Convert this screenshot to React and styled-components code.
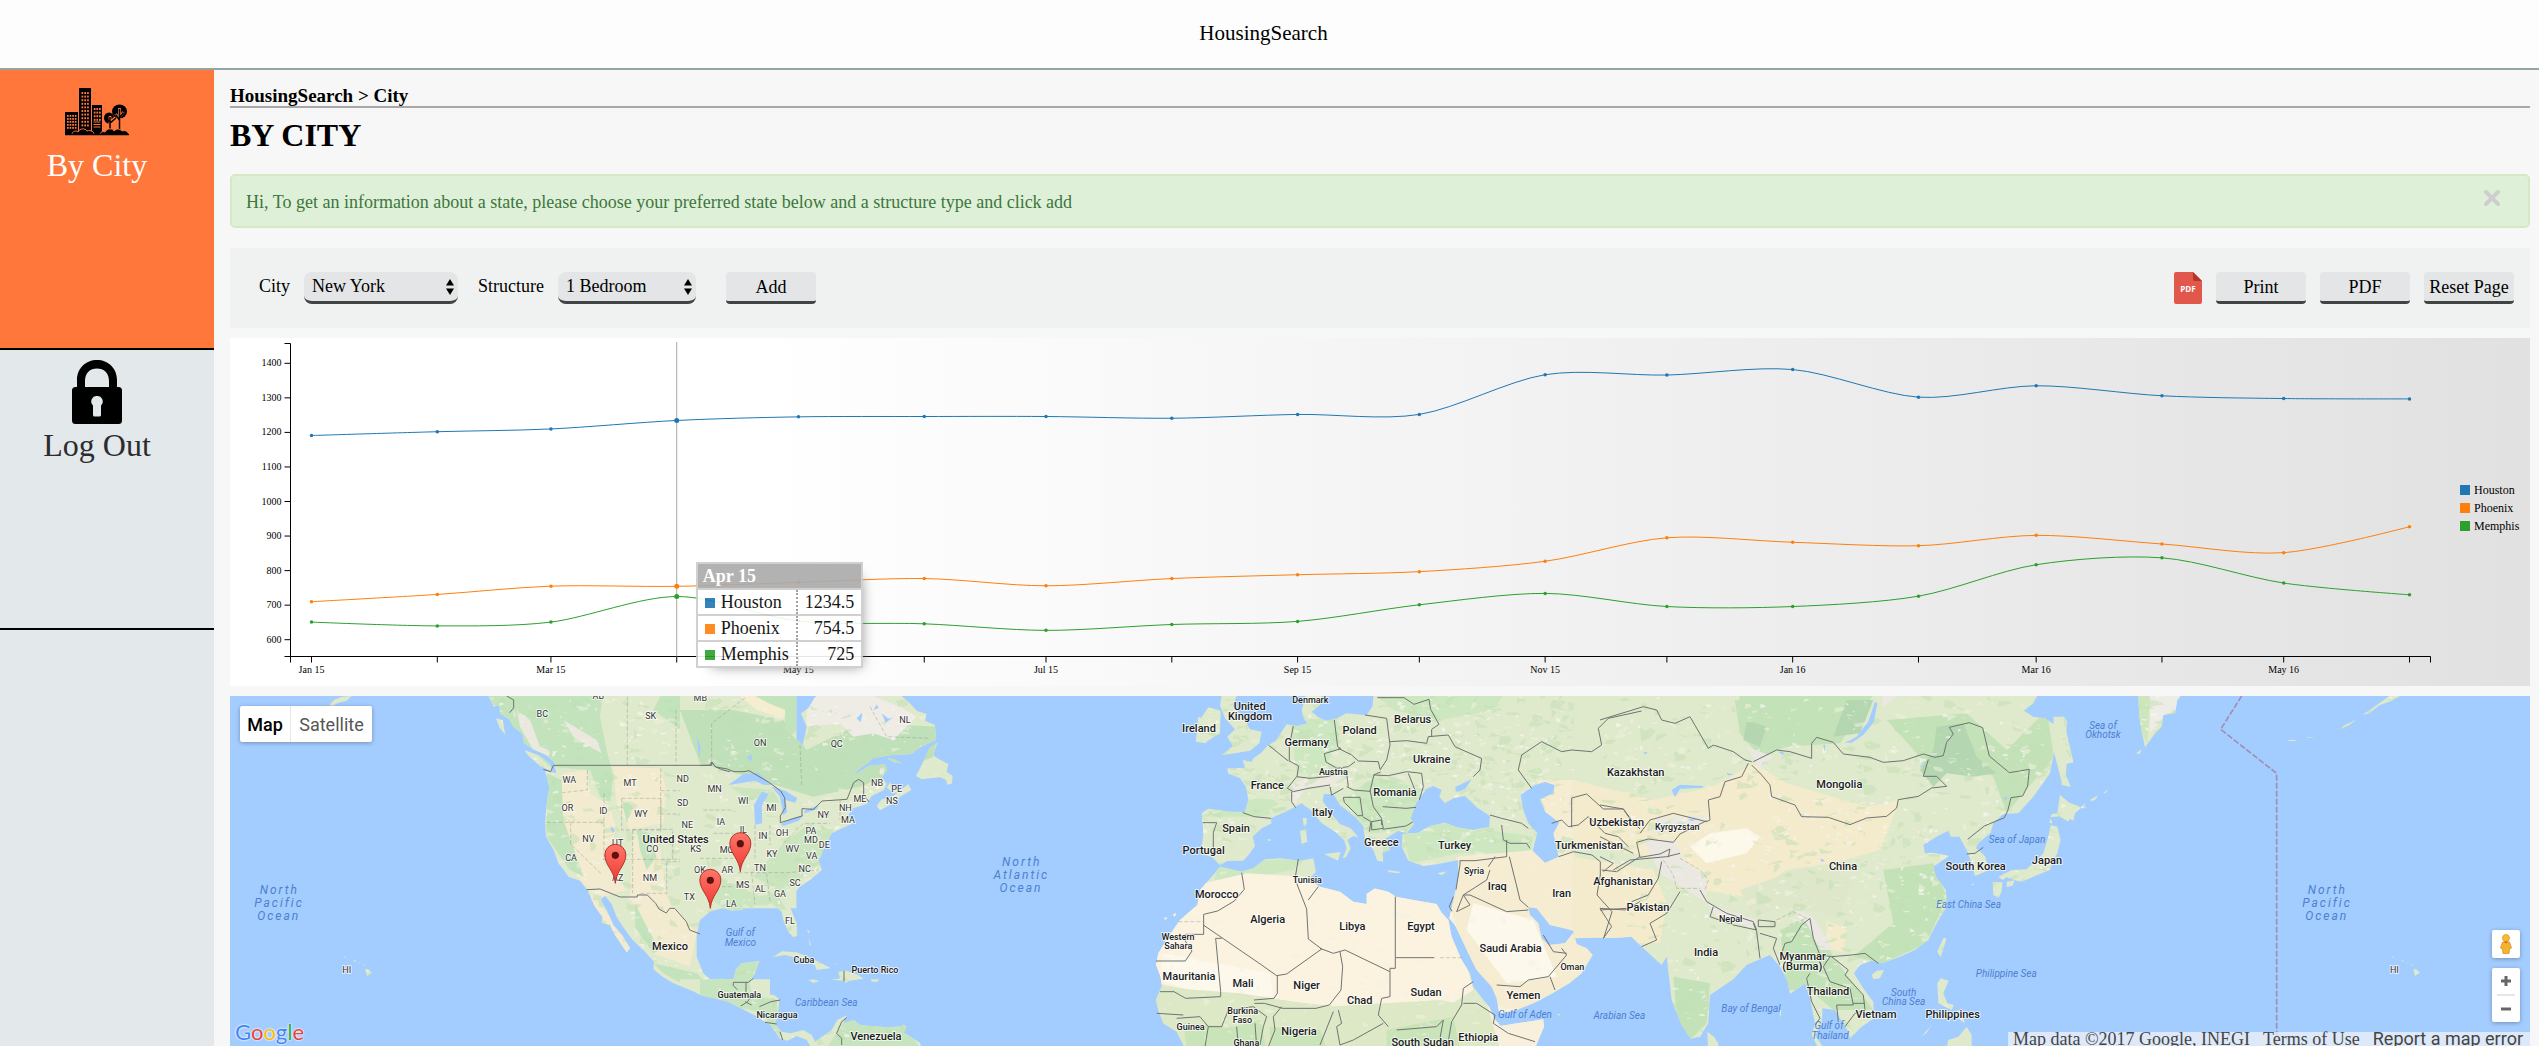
import React, { useLayoutEffect, useRef, useState } from "react";
import styled, { createGlobalStyle } from "styled-components";

const serif = `"Liberation Serif", "Times New Roman", serif`;
const sans = `Roboto, "Liberation Sans", sans-serif`;

const GlobalStyle = createGlobalStyle`
  * { box-sizing: border-box; }
  body { margin: 0; background: #f7f7f7; color: #000; font-family: ${serif}; font-size: 18px; }
  button, select { font: inherit; color: inherit; }
`;

const Page = styled.div`
  display: flex;
  flex-direction: column;
  min-height: 100vh;
`;

const Header = styled.header`
  height: 70px;
  padding: 0 12px 2px 0;
  display: flex;
  align-items: center;
  justify-content: center;
  background: #fdfdfd;
  border-bottom: 2px solid #95a5a6;
  font-size: 21px;
`;

const Body = styled.div`
  flex: 1;
  display: flex;
`;

const Sidebar = styled.nav`
  flex: 0 0 214px;
  background: #e3e8eb;
`;

const NavItem = styled.a`
  display: flex;
  flex-direction: column;
  align-items: center;
  height: 280px;
  padding: ${(p) => (p.$active ? "18px" : "10px")} 20px 0 0;
  border-bottom: 2px solid #000;
  background: ${(p) => (p.$active ? "#ff773a" : "transparent")};
  color: ${(p) => (p.$active ? "#fff" : "#2c2c30")};
  font-size: 32px;
  line-height: 40px;
  text-decoration: none;

  svg { display: block; margin-bottom: ${(p) => (p.$active ? "9px" : "1px")}; }
`;

const Content = styled.main`
  flex: 1;
  min-width: 0;
  padding: 16px 9px 0 16px;
`;

const Breadcrumb = styled.div`
  border-bottom: 2px solid #a8a8a8;
  font-size: 19px;
  font-weight: bold;
  line-height: 20px;
`;

const Title = styled.h1`
  margin: 8px 0 20px;
  font-size: 32px;
  line-height: 38px;
`;

const Alert = styled.div`
  display: flex;
  align-items: center;
  justify-content: space-between;
  height: 54px;
  padding: 2px 28px 0 14px;
  border: 2px solid #d6e9c6;
  border-radius: 5px;
  background: #dff0d8;
  color: #3c763d;
`;

const CloseButton = styled.button`
  padding: 0 0 8px;
  border: 0;
  background: none;
  line-height: 0;
`;

const Toolbar = styled.div`
  display: flex;
  align-items: flex-start;
  justify-content: space-between;
  height: 80px;
  margin-top: 20px;
  padding: 24px 16px 0 29px;
  background: #f0f2f1;
`;

const Group = styled.div`
  display: flex;
  align-items: flex-start;
  gap: ${(p) => p.$gap}px;
`;

const FieldLabel = styled.label`
  display: flex;
  gap: 14px;
  line-height: 29px;
`;

const SelectBox = styled.span`
  position: relative;
  display: block;
  width: ${(p) => p.$width}px;

  svg { position: absolute; right: 4px; top: 7px; pointer-events: none; }
`;

const Select = styled.select`
  appearance: none;
  display: block;
  width: 100%;
  height: 32px;
  padding: 0 20px 0 8px;
  border: 0;
  border-bottom: 3px solid #404543;
  border-radius: 8px;
  background: #e4e5e7;
`;

const Button = styled.button`
  width: 90px;
  height: 32px;
  padding: 2px 0 0;
  border: 0;
  border-bottom: 3px solid #404543;
  border-radius: 4px;
  background: #e4e5e7;
  white-space: nowrap;
`;

const ChartBox = styled.section`
  position: relative;
  height: 348px;
  margin-top: 10px;
  background: linear-gradient(to right, #fff 23%, #e1e1e1);

  > svg { display: block; }
`;

const Tooltip = styled.table`
  position: absolute;
  top: 224px;
  width: 166px;
  border-collapse: collapse;
  background: #fff;
  opacity: 0.9;
  box-shadow: 7px 7px 12px -9px #777;

  th, td { height: 26px; padding: 0 7px; border: 2px solid #ccc; line-height: 24px; white-space: nowrap; }
  th { background: #aaa; color: #fff; text-align: left; padding-left: 5px; }
  td:first-child { border-right: 2px dotted #999; }
  td:last-child { border-left: 2px dotted #999; text-align: right; }
`;

const Swatch = styled.span`
  display: inline-block;
  width: 10px;
  height: 10px;
  margin-right: 6px;
  background: ${(p) => p.$color};
`;

const MapBox = styled.section`
  position: relative;
  height: 350px;
  margin-top: 10px;
  overflow: hidden;
  background: #a3ccff;
  font-family: ${sans};

  > svg { display: block; width: 100%; height: 100%; }
`;

const MapType = styled.div`
  position: absolute;
  left: 10px;
  top: 10px;
  display: flex;
  border-radius: 2px;
  background: #fff;
  box-shadow: 0 1px 4px rgba(0, 0, 0, 0.3);
`;

const TypeButton = styled.button`
  height: 36px;
  width: ${(p) => (p.$active ? "50px" : "82px")};
  padding: 0;
  border: 0;
  border-left: ${(p) => (p.$active ? "0" : "1px solid #e6e6e6")};
  background: none;
  color: ${(p) => (p.$active ? "#000" : "#565656")};
  font-size: 18px;
  font-weight: ${(p) => (p.$active ? 500 : 400)};
`;

const MapControls = styled.div`
  position: absolute;
  right: 10px;
  bottom: 24px;
  display: flex;
  flex-direction: column;
  gap: 10px;
`;

const ControlCard = styled.div`
  display: flex;
  flex-direction: column;
  align-items: center;
  width: 28px;
  border-radius: 2px;
  background: #fff;
  box-shadow: 0 1px 4px rgba(0, 0, 0, 0.3);
`;

const ControlRule = styled.span`
  width: 18px;
  height: 2px;
  background: #e6e6e6;
`;

const ControlButton = styled.button`
  display: flex;
  align-items: center;
  justify-content: center;
  width: 28px;
  height: ${(p) => p.$height}px;
  padding: 0;
  border: 0;
  background: none;
`;

const GoogleMark = styled.a`
  position: absolute;
  left: 5px;
  bottom: 2px;
  font-family: Lato, sans-serif;
  font-size: 22px;
  line-height: 24px;
  text-decoration: none;
  text-shadow: 0 0 2px #fff, 0 0 2px #fff;
`;

const Tint = styled.span`
  color: ${(p) => p.$color};
`;

const Attribution = styled.div`
  position: absolute;
  right: 0;
  bottom: 0;
  display: flex;
  gap: 13px;
  height: 14px;
  padding: 0 7px 0 5px;
  background: rgba(245, 245, 245, 0.7);
  color: #444;
  font-family: ${serif};
  line-height: 14px;
  white-space: nowrap;

  a { color: inherit; text-decoration: none; }
  a:last-child { font-family: ${sans}; }
`;

/* ---------- icons ---------- */

const Windows = ({ x, y, cols, rows, dx = 3, dy = 4, h = 2 }) => (
  <g fill="#ff773a">
    {Array.from({ length: cols * rows }, (_, i) => (
      <rect key={i} x={x + (i % cols) * dx} y={y + Math.floor(i / cols) * dy} width="1.7" height={h} />
    ))}
  </g>
);

const CityIcon = () => (
  <svg width="64" height="48" viewBox="0 0 64 48" aria-hidden="true">
    <path d="M0 24h13v23H0zM14 0h12v47H14zM27 17h10v30H27z" />
    <Windows x={2} y={27} cols={4} rows={5} dx={2.6} dy={3} h={1.8} />
    <Windows x={16.5} y={4} cols={3} rows={10} dx={2.8} dy={3.6} />
    <Windows x={28.8} y={20} cols={3} rows={4} dx={2.6} dy={3.6} />
    <path d="M28.5 34h7M28.5 36.5h7M28.5 39h7" stroke="#ff773a" />
    <ellipse cx="54.5" cy="23.5" rx="7.5" ry="7" />
    <ellipse cx="44" cy="30" rx="5" ry="5.5" />
    <path d="M54.500 20v22M54.500 31l-4-5M54.500 29l4-5M45 28v14M45 34l5-4" stroke="#ff773a" strokeWidth="2.800" fill="none" />
    <path d="M54.500 21v24M54.500 32l-4-5.500M54.500 30l4-5.500M45 29v15M45 35l6-5M45 34l-3-3" stroke="#000" strokeWidth="1.500" fill="none" />
    <path d="M7 47c0-4 4-5 6-3 2-4 7-4 9-1 4-1 7 0 7 4zM35 47c0-3 3-4 5-3 2-4 8-4 9-1 3-3 6-2 8 0 3-1 6 0 7 4z" stroke="#ff773a" />
    <path d="M0 46.500h64" stroke="#000" strokeWidth="1.500" />
  </svg>
);

const LockIcon = () => (
  <svg width="50" height="64" viewBox="0 0 50 64" aria-hidden="true">
    <path
      fillRule="evenodd"
      d="M5 27V20C5 8 14 0 25 0s20 8 20 20v7h1.500a3.500 3.500 0 0 1 3.500 3.500v30a3.500 3.500 0 0 1-3.500 3.500h-43A3.500 3.500 0 0 1 0 60.500v-30A3.500 3.500 0 0 1 3.500 27zM13 27h24v-6c0-8-5-12.500-12-12.500S13 13 13 21zM25 36a5.500 5.500 0 0 0-4 9.500V55q0 1.500 1.500 1.500h5q1.500 0 1.500-1.500v-9.500A5.500 5.500 0 0 0 25 36z"
    />
  </svg>
);

const PdfIcon = () => (
  <svg width="28" height="32" viewBox="0 0 28 32" aria-label="PDF file" role="img">
    <path d="M2 0h17l9 9v21a2 2 0 0 1-2 2H2a2 2 0 0 1-2-2V2a2 2 0 0 1 2-2z" fill="#e2574c" />
    <path d="M19 0l9 9h-7a2 2 0 0 1-2-2z" fill="#b53629" />
    <text x="14" y="20" textAnchor="middle" fontFamily="Open Sans, sans-serif" fontSize="8" fontWeight="700" fill="#fff">PDF</text>
  </svg>
);

const Arrows = () => (
  <svg width="8" height="16" viewBox="0 0 8 16" aria-hidden="true">
    <path d="M4 0l4 6.500H0zM4 16l4-6.500H0z" />
  </svg>
);

const CloseIcon = () => (
  <svg width="16" height="16" viewBox="0 0 16 16" aria-hidden="true">
    <path d="M2 2l12 12M14 2L2 14" stroke="#cecece" strokeWidth="4" strokeLinecap="round" />
  </svg>
);

const Pegman = () => (
  <svg width="12" height="20" viewBox="0 0 12 20" aria-hidden="true">
    <path d="M2.500 8L.5 14l2 .8L3 19.500h6l.5-4.700 2-.8-2-6z" fill="#f5b32b" stroke="#c98c1d" strokeWidth=".7" />
    <circle cx="6" cy="4" r="3.500" fill="#fbbc2c" stroke="#d1931e" strokeWidth=".7" />
    <path d="M4 7.500h4L6 9.500z" fill="#e5542f" />
  </svg>
);

/* ---------- chart ---------- */

const DAYS = [0, 31, 59, 90, 120, 151, 181, 212, 243, 273, 304, 334, 365, 396, 425, 456, 486, 517];
const MONTHS = ["Jan 15", "", "Mar 15", "", "May 15", "", "Jul 15", "", "Sep 15", "", "Nov 15", "", "Jan 16", "", "Mar 16", "", "May 16", ""];
const SERIES = [
  { name: "Houston", color: "#1f77b4", values: [1191, 1202, 1210, 1234.5, 1245, 1246, 1246, 1241, 1252, 1252, 1367, 1366, 1382, 1302, 1335, 1306, 1298, 1297] },
  { name: "Phoenix", color: "#ff7f0e", values: [710, 731, 755, 754.5, 766, 777, 756, 777, 788, 797, 827, 895, 882, 872, 902, 877, 852, 927] },
  { name: "Memphis", color: "#2ca02c", values: [651, 640, 651, 725, 654, 646, 627, 644, 653, 701, 734, 696, 696, 726, 817, 837, 764, 730] },
];
const FOCUS = 3;

function cardinal(points) {
  const tangent = (i) => {
    const a = points[i - 1];
    const b = points[i + 1];
    return a && b ? [(b[0] - a[0]) * 0.15, (b[1] - a[1]) * 0.15] : [0, 0];
  };
  return points.reduce((d, p, i) => {
    if (!i) return `M${p}`;
    const q = points[i - 1];
    const s = tangent(i - 1);
    const t = tangent(i);
    return `${d}C${q[0] + s[0]},${q[1] + s[1]} ${p[0] - t[0]},${p[1] - t[1]} ${p}`;
  }, "");
}

function Chart() {
  const box = useRef(null);
  const [width, setWidth] = useState(2300);

  useLayoutEffect(() => {
    const measure = () => setWidth(box.current.clientWidth);
    measure();
    const observer = new ResizeObserver(measure);
    observer.observe(box.current);
    return () => observer.disconnect();
  }, []);

  const left = 60.5;
  const right = width - 99.5;
  const base = 318.5;
  const x = (day) => 81.5 + (day * (width - 202)) / 517;
  const y = (value) => 301.7 - (value - 600) * 0.3455;

  return (
    <ChartBox ref={box}>
      <svg width={width} height="348" fontFamily={serif} fontSize="10" role="img" aria-label="Rent by city">
        <path d={`M${left - 6} 5.500H${left}V${base}H${left - 6}M${left} ${base + 6}V${base}H${right}v6`} fill="none" stroke="#000" />
        {[600, 700, 800, 900, 1000, 1100, 1200, 1300, 1400].map((v) => (
          <g key={v}>
            <path d={`M${left - 6} ${y(v)}h6`} stroke="#000" />
            <text x={left - 9} y={y(v) + 3} textAnchor="end">{v}</text>
          </g>
        ))}
        {DAYS.map((day, i) => (
          <g key={day}>
            <path d={`M${x(day)} ${base}v6`} stroke="#000" />
            <text x={x(day)} y={base + 16} textAnchor="middle">{MONTHS[i]}</text>
          </g>
        ))}
        <path d={`M${x(DAYS[FOCUS])} 4V${base}`} stroke="#aaa" />
        {SERIES.map((s) => {
          const points = s.values.map((v, i) => [x(DAYS[i]), y(v)]);
          return (
            <g key={s.name} fill={s.color}>
              <path d={cardinal(points)} fill="none" stroke={s.color} />
              {points.map(([cx, cy], i) => (
                <circle key={i} cx={cx} cy={cy} r={i === FOCUS ? 2.5 : 1.75} />
              ))}
            </g>
          );
        })}
        {SERIES.map((s, i) => (
          <g key={s.name} fontSize="12">
            <rect x={width - 70} y={147 + i * 18} width="10" height="10" fill={s.color} />
            <text x={width - 56} y={156 + i * 18}>{s.name}</text>
          </g>
        ))}
      </svg>
      <Tooltip style={{ left: x(DAYS[FOCUS]) + 19 }}>
        <thead>
          <tr><th colSpan="2">Apr 15</th></tr>
        </thead>
        <tbody>
          {SERIES.map((s) => (
            <tr key={s.name}>
              <td><Swatch $color={s.color} />{s.name}</td>
              <td>{s.values[FOCUS]}</td>
            </tr>
          ))}
        </tbody>
      </Tooltip>
    </ChartBox>
  );
}

/* ---------- map ----------
   The world is drawn at three units a pixel, in five sheets side by side. */

const SHEET = { america: 0, atlantic: 1410, europe: 2730, asia: 4110, pacific: 5490 };

const LAND = {
  america: [
    "M775 18L792 50 806 45 812 72 838 88 850 110 878 132 882 160 910 178 950 196 972 215 978 250 945 243 958 290 950 340 945 400 948 440 972 482 985 520 1005 545 1015 560 1050 572 1072 600 1095 650 1118 682 1115 698 1140 705 1155 735 1190 787 1200 775 1178 738 1150 705 1130 660 1112 630 1125 617 1145 642 1160 682 1182 715 1208 750 1240 780 1272 815 1270 838 1300 862 1330 880 1380 900 1420 916 1445 906 1475 925 1620 1000V868H1440L1420 850 1400 800 1400 740 1410 690 1440 665 1475 655 1700 655V18Z",
    "M883 180L930 197 960 222 968 246 930 228 895 197Z",
    "M798 85L818 90 826 135 808 112Z",
    "M298 45L312 30 335 20 365 18 350 32 325 38 308 48Z",
    "M405 838L414 838 426 848 412 858ZM369 810l9 2-3 4zM342 799l6 1-3 5zM400 823l5 2-3 3zM386 818l5 0-3 3z",
  ],
  atlantic: [
    "M-60 18H165L205 40 255 60 256 115 290 150 308 165 320 110 303 70 325 55 345 22 350 18H605L630 40 650 62 680 72 675 92 705 105 708 150 660 172 635 192 570 196 520 205 475 240 460 258 505 228 555 222 562 240 545 262 560 282 552 300 515 318 500 342 460 355 440 382 465 385 462 398 395 430 372 475 362 500 355 510 366 540 330 570 300 590 278 615 270 650 290 700 292 738 280 742 265 725 250 690 245 665 215 640 195 646 165 645 155 655 130 640 128 660 95 662 60 652 -60 655V868H40L58 866 100 868 108 838 125 820 178 813 165 850 148 880 155 908 195 912 222 915 238 928 234 975 225 1002 245 1025 272 1030 310 1020 335 1035 345 1055 395 1020 412 990 440 976 430 1000 462 990 480 1005 560 1012 620 1008 612 1028 660 1058 665 1075H335L320 1050 290 1038 262 1052 240 1046 212 1005 185 990 165 962 125 955 85 935 0 915 -60 880Z",
    "M648 258L665 225 690 172 712 158 700 195 712 205 745 222 740 245 758 258 756 280 742 285 738 270 720 262 690 265 665 268Z",
    "M530 348L545 328 575 322 625 282 634 300 600 320 570 345 540 360ZM560 292l12-16 4 22 24 6-20 6z",
    "M560 205l20 2 25 12-18 0z",
    "M218 802L245 784 290 787 340 808 392 834 350 840 345 826 300 806 255 795Z",
    "M392 868L420 866 415 845 440 842 475 855 490 866 450 872 437 878 425 872Z",
    "M325 870l18-2 14 6-16 5zM513 868h24l-4 7h-18zM322 718l8 8-6 4zM325 742l9 26-5-4zM606 1005l10 0-2 8zM550 866l5 2zM404 820l6 1-3 3zM362 710l4 14zM610 916l4 6z",
    "M1495 80L1520 90V160L1488 155Z",
  ],
  europe: [
    "M497 18H700L698 48 680 76 620 70 590 85 560 92 535 82 515 65 540 45 545 18ZM497 18L485 60 492 88 505 100 470 108 440 103 425 125 408 152 385 165 362 190 340 205 335 215 308 210 315 235 262 235 265 250 300 265 318 290 325 330 315 366 270 365 205 356 185 370 190 430 183 492 215 500 240 525 262 513 310 512 330 490 345 468 338 440 365 415 395 400 392 385 430 368 460 354 485 340 512 360 545 400 585 425 612 450 620 475 608 505 618 502 632 475 622 450 640 438 655 442 632 415 600 402 575 372 548 332 552 312 580 312 600 345 645 380 670 408 675 448 700 480 712 512 730 515 728 488 750 480 738 445 775 422 800 430 822 402 812 385 828 340 858 298 880 288 905 300 898 320 915 340 940 325 975 318 1010 352 1050 378 1048 410 1000 420 950 412 915 398 870 408 835 428 788 432 785 470 805 512 850 528 895 522 955 510 955 560 945 610 928 685 945 705 985 790 1010 840 1055 890 1070 925 1078 970 1130 960 1190 935 1240 908 1290 878 1325 850 1358 795 1340 775 1310 762 1300 728 1275 760 1225 765 1205 745 1195 700 1170 675 1165 652 1190 655 1230 705 1285 718 1320 728 1390 745 1485 740 1560 780V18H700L497 18Z",
    "M925 690L905 668 890 642 850 635 768 620 745 605 705 595 680 612 680 642 640 635 600 605 540 590 505 570 528 545 520 505 480 512 420 505 375 508 340 535 305 545 240 530 215 560 182 598 172 645 120 690 85 740 55 790 48 825 62 860 65 890 48 930 55 960 70 1000 110 1025 135 1075H1185L1212 1010 1210 988 1130 1000 1082 1008 1062 985 1050 955 1000 890 990 850 965 810 935 740Z",
    "M245 18H290L278 48 315 88 330 118 365 125 358 160 330 182 245 196 278 168 262 140 285 118 255 85 240 45Z",
    "M168 152L180 128 165 112 205 52 242 62 240 130 195 158Z",
    "M480 422L498 418 502 455 485 462ZM488 385l12 0 0 18-8 8zM552 492l50-6-8 26zM742 540l42 6-10 4-28-4zM892 550l28-6-14 12zM382 446l14 4-10 4zM792 480l6 6zM50 680l6 5zM72 684l10-2-5 8zM98 675l10-7-3 12zM1252 972l12 1-8 4z",
  ],
  asia: [
    "M-80 18H1312L1300 40 1272 62 1300 80 1335 85 1365 105 1362 190 1350 250 1300 320 1255 370 1210 372 1180 398 1172 428 1135 460 1128 475 1155 498 1168 540 1125 558 1115 520 1100 480 1078 440 1052 440 1045 422 1010 440 970 465 975 490 1000 488 1048 498 1000 530 1008 560 1038 600 1040 650 1010 700 985 750 945 780 900 800 848 820 815 812 780 825 762 850 790 895 820 935 822 985 785 1010 750 1045 742 1020 705 960 668 955 665 1005 645 1035 672 1075H655L635 1035 645 1000 630 925 615 880 570 912 562 870 540 830 510 795 480 808 440 825 400 868 330 915 325 1000 300 1040 272 1046 245 1005 215 930 200 800 185 825 125 770 95 740-80 745Z",
    "M1380 314L1400 335 1440 350 1425 370 1420 392 1390 378 1350 382 1358 400 1348 398 1355 372 1372 370Z",
    "M1352 405L1372 410 1382 450 1372 490 1358 515 1350 540 1320 552 1265 575 1250 572 1220 562 1208 570 1195 560 1235 540 1280 538 1330 490 1345 440Z",
    "M1178 575l30 2-4 30-8 16-16-8zM1220 575l24-4-6 16-18 4z",
    "M1390 78L1402 95 1398 120 1420 215 1400 222 1398 255 1412 290 1385 285 1390 220 1378 150Z",
    "M1012 785L1030 745 1040 745 1022 802ZM815 855L830 842 852 840 840 865 820 868ZM1012 880L1022 865 1046 872 1030 910 1042 940 1062 945 1055 960 1015 940ZM1040 1075L1045 1050 1075 1040 1100 1010 1115 1035V1075ZM964 1040l34-38-20 28zM1035 965l20 15-10 15zM1070 960l15 5 10 35-15-10zM322 1025l20 15 14 22-8 14h-24zM538 960l6 0-2 25zM1112 582l12 0-6 4zM1450 355l8-8-2 8zM1470 330l28-18-22 20z",
  ],
  pacific: [
    "M235 18H362L352 30 345 70 310 75 305 110 282 135 255 172 246 130 238 80Z",
    "M228 190l16-12-4 14zM90 335l24-18-8 12zM60 355l16-16-6 16zM130 308l16-12-10 14zM168 280l8-6zM412 50l12 16zM528 120l10 3zM604 145l6 3zM683 150h28l-6 3h-22zM738 142l28-1-20 3zM840 118l12-12 35-16-18 15zM908 74l30-20 50-36 32 0-28 16-34 12-30 24zM-20 80l32 0 8 20-4 80 24 38-24 0-8 35 20 38-22 -12-26-100zM0 315l30 25 32 14-20 18-18 22-24-14z",
    "M1060 838L1069 838 1080 848 1065 858ZM1023 810l9 2-3 4zM996 799l6 1-3 5zM1053 823l5 2-3 3zM1039 818l5 0-3 3z",
  ],
};

const WATER = {
  america: ["M1350 100l20-15 22 10 20 30-5 40-12 25-10-40-25-30z", "M1142 408l10 10 0 10-8-6z", "M1405 150l10 30-4 12z"],
  atlantic: [
    "M85 285L130 253 175 248 215 285 190 284 165 272 130 278Z",
    "M162 345L185 305 206 312 186 345 186 400 165 404Z",
    "M215 290L255 302 292 325 285 338 255 330 262 365 250 375 240 320Z",
    "M243 402L275 385 312 375 296 392 250 408Z",
    "M312 362L355 346 350 358 315 370Z",
    "M470 85l18-18-6 30zM545 70l20 16 14-4-22 16zM140 205l14-12 2 20zM-10 140l12 30-4 35z",
    "M520 60l10-16 6 10z",
  ],
  europe: [
    "M1142 315L1185 285 1215 276 1244 285 1240 310 1200 328 1215 365 1258 398 1240 430 1256 500 1215 518 1178 482 1192 430 1165 400 1150 360Z",
    "M945 292L995 268 975 298 950 306Z",
    "M1365 300l14-10 4 16-18 22zM1328 330l6 0 0 14z",
  ],
  asia: [
    "M735 158L770 140 805 95 825 35 832 40 822 95 790 135 755 158Z",
    "M215 300L240 284 310 288 308 293 240 296 225 322Z",
    "M262 388h28l-14 6zM535 185l16 0-2 10zM670 165l6 0-2 20zM380 248l22 6-18 2zM130 186l12 0-6 8zM660 505l14 6-8 6zM960 232l10-16-4 16zM1210 325l12-6-4 14z",
  ],
  pacific: [],
};

/* terrain patches: [fill, path], clipped to the coastline */
const TERRAIN = {
  america: [
    ["#c3e3bd", "M760 0H1120L1110 80 1130 180 1150 260 1140 340 1110 320 1080 240 960 230 860 140Z"],
    ["#c3e3bd", "M1300 0H1700V120L1560 260 1460 240 1400 180 1340 110 1270 60Z"],
    ["#ebe8df", "M860 60L900 90 930 170 960 180 955 205 910 180 870 110ZM1000 90L1050 120 1100 150 1115 190 1080 170 1030 140Z"],
    ["#f3ebcf", "M1000 250L1070 240 1080 310 1140 350 1160 420 1120 520 1190 600 1100 625 1050 570 1010 450 990 350ZM1150 230L1290 235 1310 300 1300 400 1200 420 1160 340ZM1210 430L1290 470 1310 620 1400 730 1380 830 1270 790 1200 620Z"],
    ["#c3e3bd", "M950 250L995 270 1000 390 1040 500 1060 560 1020 540 950 440ZM1215 640L1245 700 1290 780 1270 790 1215 710ZM1270 820L1400 850 1440 890 1400 905 1300 850ZM1175 330L1210 350 1190 400ZM1220 420L1260 430 1280 500 1250 540 1230 480Z"],
    ["#f3ebcf", "M1085 610L1200 760 1210 800 1180 790 1080 640Z"],
  ],
  atlantic: [
    ["#bfe0b9", "M-60 60L100 60 250 90 320 180 480 100 720 110 700 200 480 290 340 320 180 270 0 220Z"],
    ["#eeece4", "M320 18H520L600 50 650 80 580 150 520 130 460 140 420 100 320 110Z"],
    ["#f5edd0", "M120 18H170L260 60 250 85 170 60Z"],
    ["#cbe5bf", "M260 450L330 400 400 420 380 500 320 550 260 600 180 620 60 560 20 620 80 660 260 660 220 590 160 560ZM90 290L220 300 240 340 150 330Z"],
    ["#c6e4bd", "M0 790H180V920L230 930 240 1040 180 980 0 920Z"],
    ["#c6e4bd", "M380 1075L440 980 620 1010 660 1075Z"],
  ],
  europe: [
    ["#cde7c0", "M450 90L590 85 600 160 540 250 470 250ZM690 0H1100L1060 60 900 90 760 60ZM310 320L400 330 440 360 360 380 180 380 250 350ZM700 260L860 300 830 420 690 430 610 330ZM790 430L900 400 1180 440 1170 490 1100 490 960 490 810 520ZM230 520L500 505 460 540 300 570 220 610Z"],
    ["#ece9e1", "M440 290L500 265 620 255 590 290 500 290 460 350Z"],
    ["#f5ecd2", "M950 500L1180 480 1500 490 1500 780 1360 900 1080 975 920 700ZM1190 270L1500 270 1500 480 1240 450Z"],
    ["#fbf3df", "M20 620L320 550 500 560 780 610 930 640 1000 900 920 950 700 960 400 930 200 910 50 880Z"],
    ["#fcf8ec", "M1000 640L1180 690 1250 860 1100 880 980 720ZM70 790L390 850 400 920 180 910 60 870Z"],
    ["#dce8c6", "M40 890L300 910 560 950 900 930 1060 960 1150 1075H40Z"],
    ["#c8e4b8", "M130 1000L280 1010 360 990 380 1075H140ZM390 1010L540 1020 560 1075H390ZM740 1020L940 980 960 1075H740Z"],
    ["#f8f0dc", "M1040 940L1230 980 1200 1075H1080Z"],
  ],
  asia: [
    ["#c4e2b8", "M400 0H830L720 160 560 170 480 200 420 130ZM860 90L1100 70 1220 180 1340 60 1362 200 1220 370 1180 260 1080 190 1000 290 960 200ZM850 540L1000 520 1040 620 980 760 850 820 760 800 880 700ZM540 720L640 680 700 800 820 960 700 960 630 900 560 900ZM220 860L330 880 320 1000 270 1050 230 980Z"],
    ["#b4d7b1", "M1010 110L1090 100 1130 200 1190 250 1120 260 1040 250 1000 290 960 240 1000 180ZM740 30L820 30 780 130 700 140ZM440 90L500 110 480 170 430 150Z"],
    ["#f4ebcd", "M-80 270L160 330 340 290 460 220 560 280 800 350 900 330 840 480 700 520 560 540 440 620 300 600 150 500-80 460ZM-80 500L160 540 200 640 180 760-80 760ZM680 690L740 720 730 790 680 770Z"],
    ["#fcf8ea", "M270 470L330 430 440 415 480 440 440 490 320 520Z"],
    ["#eae8e1", "M130 450L220 450 260 520 320 560 320 640 260 600 180 550ZM320 640L470 690 460 715 350 680ZM560 645L640 680 700 780 660 780 620 700ZM440 170L520 200 480 240ZM170 385L320 375 300 410 150 430ZM840 0H920L850 50Z"],
    ["#dfe7cb", "M420 600L620 530 760 560 720 680 560 650 460 680Z"],
  ],
  pacific: [
    ["#eeece6", "M270 0H360V60L320 70 270 130Z"],
    ["#cfe6bd", "M230 0H270L262 160 240 120Z"],
  ],
};

const BORDERS = {
  america: ["M830 18l21 12v24l-12 14M940 238l22 7 8-19H1440l5-10 12 15 25 10 18 4", "M1070 599l40-2 60 24h52v-6h30l25 25 10 17 22 12 10-14h15l35 40 10 25 31 12"],
  atlantic: ["M0 226h35v-10l12 15 35 6 20 8h30l15-3 60 35 35 26 12 20 2 30-15 25v20l65-20v-22l35 2 25-25 75-5 20-50 15-10 15 10v35l15 22", "M160 865l-15 12h-45v10l12 12M138 877v30l14 14-10 15-20 12M135 935l20 10M178 950l35-15 28-5M195 997l35 5M240 1025l8 25M432 843v32M440 983l-15 12-15 35 15 15v20"],
  europe: [
    "M583 90l10 80 10 6-50 15 5 25 35 20M595 175l40 20 20 18 60 2 5 22M720 240l20-30 10-45-10-80-65-10M590 235l35-5 20-15M620 250l5 40M620 290l20 10 50 4 12-50 20-8M750 155l50-3 60 8 5-20 60-5 20 35 45 20 35 15-5 35-20 20M875 140v-22l22-15-25-45-5-30-45 15-30-20h-80",
    "M460 108l-12 60 0 45 28 15-5 32M385 165l60 48M470 260l40 5 50-5 55-15M470 260l-28 35 18 10 45-10 65-10M455 305v30l12 18M308 368l35 12 50 5M188 398l42 0-10 30 0 65",
    "M570 290l5 25 35-20M610 322l50 0 8 55-15 0-40-40zM668 380l25 15-5 30M690 300l10 50 25 35 0 20M695 395l30-5 5 25-35 5zM700 255l45 2 55-12 45 5 5 40-12 40M728 350l70 5 30-3M728 418l70-10 20-12M805 250l20 50",
    "M1050 375l35 10 60 15 20 15M1085 405l5 45 20 10 50 0 10 15M1100 450v50l-95 12-45 0v12l-12 75M1045 530l20-30M1108 500l20 80 12 50 25 22M1050 540l-10 30-70 45-20 50 40-20-20-30 20 0 110 50 65-5M940 620l-12 30 8 14",
    "M305 548l8 50-30 35-50 30-42 10v60h-55v20l20 30-20 30H48M190 705l175 120 45 32 30-5 105-75-40-30-5-90-35-90 10-60M535 590l-30 40M540 775l40 15 35-10 135 65v-10h16V620M768 803h115M600 785l8 45-5 70-35 45-40 10-100 0-55-15-30 0M412 855l0 55-10 15-60 5M245 745l-18 0 15 160 0 15-105 5-35-20H60M750 845v75l-25 5-10 50 30 35M770 1020l120-10 20-20-10 55 20 25M1000 875l-30 20-5 50-30 50-12 70M970 940l40 0 55 35-5 25 45 30 80 25M595 960l10 40-15 10 10 55 40-15 90-50",
    "M130 975l-80-5M110 985l70-5 25 30-10 60M205 1010l40 0 20-50 75-10 40 30-10 30-10 55M290 1010l5 60M345 1000l5 70M385 1070l20-50-5-40 25-30M580 965l-40 100M1070 885l70 5 25-20 60-10 55-65-15-20M1230 860l15 40M1210 735l30 50 40 5",
    "M1175 295l-40-55 10-45 60-40 60 30 30-5 60 5 30-20-10-50 30-30 100-22M1295 412v-88l45-12 50 45 60 0 30 40M1235 400l30-10 20 20 30-5 30-25 50 50 40 10 30 30M1256 500l45-15 55 10 25 20 0 40-10 60 45 50-25 80M1380 655l75 5 45-25M1385 540l45 5 70-45",
  ],
  asia: [
    "M0 90l130-40 40 10 15 30 40 10 45-20 55 95 15-10 60 20 35 25 20 5M460 215l70-35 40 5 65 20 0-45 15-18 50 15 30 35 80 10 40 15 60-5 60-20 35 10 25-5 10-40 20-25-12-20 60-14 40 15 20 85 60 50 60-10-5 50-15 30-35 5-10 40-10 20-60 25-50 40",
    "M455 225l30 30 25 30 5 35 70 25 20 35 80 2 65 22 50-20 60-5 30-25 5-25 60-10 40-25 45-5-30-30-40 0 15-50M445 220l-20 40-50 15-15 45-35 10 5 60-10 5-100-25-70 20-30 40M320 392l-80 40-20 25-75-10-35 10 10 45 60-10 30-15-5 25M0 345l70 12 20 30 30 30M0 440l40 20 60 30M0 500l40 20-30 25M40 540l50-30 110-10 40-10M185 515l-10 50-30 50-50 20M0 660l80-5M240 605l-40 65-50 30 20 50-45 20M0 655l35 55-25 35",
    "M300 600l20 35 60 35 80 25 10 25-70-15-70-25 10-30M475 690l50 5 0 15-50 0zM460 700l10 25 10 80M480 730l50 15-10 30 20 50M545 790l10-30 20-5 30-50 25-20 10 60 20 50 35 5 60-5 40-5 40 30M690 800l-20 30 20 45 60 20 10 50-50 0 5 50M695 800l50 40-10 15 55 60 5 45-30 10-30 40M630 850l-10 15 15 70 25 50-15 20M760 940l35 0M1100 492l25-2 25-18",
  ],
  pacific: [],
};

const DASHED = {
  america: ["M1192 20v206M1338 60v166M1445 90v130M1072 240v60l-75 8M950 397h172M1022 397v65l92 90M1122 310v200M1175 325h118v95h-118zM1292 235v190M1292 302h130M1292 372h125M1208 420v190M1208 418h120v90h-210M1310 515h50v45l100 25M1310 515v95h-85M1420 240l5 135M1425 430h70M1450 508h-120"],
  atlantic: ["M35 220V100L140 20M300 165l5 120M510 50l50 90 130 5M10 360h80M40 430h60M0 505h100M95 590H40M115 548h150l90-8M165 405v100M210 405v60M250 460l60-60h80M155 548l10 95M200 550l10 85M420 330v60"],
  europe: ["M115 695h75M900 803h70"],
  asia: ["M190 510l30 45 10 40 70 0M240 505l60 35 25 30-10 30M530 690l50-25 40 20-50 20"],
  pacific: [],
};

/* lowest line that the forest specks reach on each sheet, so that deserts stay clear */
const FOREST = { america: [20, 900], atlantic: [20, 1040], europe: [20, 470], asia: [20, 1040], pacific: [20, 400] };

const LABELS = [
  ["america", "state", [[1105, 26, "AB"], [1411, 32, "MB"], [937, 80, "BC"], [1262, 88, "SK"], [1018, 278, "WA"], [1200, 288, "MT"], [1358, 275, "ND"], [1454, 305, "MN"], [1358, 347, "SD"], [1012, 363, "OR"], [1120, 371, "ID"], [1233, 382, "WY"], [1372, 415, "NE"], [1473, 405, "IA"], [1075, 455, "NV"], [1163, 469, "UT"], [1267, 485, "CO"], [1397, 485, "KS"], [1023, 512, "CA"], [1163, 572, "AZ"], [1260, 572, "NM"], [1410, 548, "OK"], [1378, 629, "TX"], [350, 850, "HI"]]],
  ["atlantic", "state", [[180, 167, "ON"], [410, 172, "QC"], [615, 100, "NL"], [531, 288, "NB"], [590, 305, "PE"], [576, 341, "NS"], [480, 335, "ME"], [130, 341, "WI"], [214, 363, "MI"], [370, 383, "NY"], [436, 363, "NH"], [444, 398, "MA"], [130, 428, "IL"], [189, 446, "IN"], [246, 437, "OH"], [333, 431, "PA"], [333, 458, "MD"], [373, 473, "DE"], [80, 488, "MO"], [277, 485, "WV"], [216, 501, "KY"], [335, 507, "VA"], [82, 550, "AR"], [180, 544, "TN"], [314, 545, "NC"], [128, 593, "MS"], [181, 605, "AL"], [285, 587, "SC"], [240, 620, "GA"], [94, 651, "LA"], [270, 702, "FL"]]],
  ["pacific", "state", [[1003, 850, "HI"]]],
  ["america", "country", [[1337, 458, "United States"], [1320, 780, "Mexico"]]],
  ["atlantic", "small", [[312, 819, "Cuba"], [525, 849, "Puerto Rico"], [118, 923, "Guatemala"], [231, 983, "Nicaragua"]]],
  ["atlantic", "country", [[528, 1050, "Venezuela"]]],
  ["europe", "country", [[329, 59, "United"], [330, 89, "Kingdom"], [177, 126, "Ireland"], [659, 131, "Poland"], [818, 99, "Belarus"], [500, 167, "Germany"], [875, 220, "Ukraine"], [382, 298, "France"], [765, 317, "Romania"], [547, 378, "Italy"], [288, 427, "Spain"], [191, 493, "Portugal"], [724, 467, "Greece"], [944, 476, "Turkey"], [1347, 476, "Turkmenistan"], [1072, 601, "Iraq"], [1265, 620, "Iran"], [230, 624, "Morocco"], [383, 698, "Algeria"], [637, 719, "Libya"], [843, 719, "Egypt"], [1112, 785, "Saudi Arabia"], [147, 869, "Mauritania"], [309, 890, "Mali"], [500, 897, "Niger"], [659, 941, "Chad"], [858, 917, "Sudan"], [1150, 926, "Yemen"], [477, 1035, "Nigeria"], [848, 1067, "South Sudan"], [1015, 1052, "Ethiopia"]]],
  ["europe", "small", [[511, 39, "Denmark"], [580, 256, "Austria"], [502, 578, "Tunisia"], [1002, 552, "Syria"], [114, 750, "Western"], [115, 776, "Sahara"], [1297, 839, "Oman"], [308, 972, "Burkina"], [307, 999, "Faso"], [152, 1019, "Guinea"], [319, 1068, "Ghana"]]],
  ["asia", "country", [[107, 258, "Kazakhstan"], [718, 293, "Mongolia"], [50, 408, "Uzbekistan"], [729, 540, "China"], [1127, 540, "South Korea"], [1341, 523, "Japan"], [69, 586, "Afghanistan"], [144, 663, "Pakistan"], [318, 797, "India"], [608, 809, "Myanmar"], [607, 840, "(Burma)"], [684, 914, "Thailand"], [828, 984, "Vietnam"], [1058, 984, "Philippines"]]],
  ["asia", "small", [[232, 419, "Kyrgyzstan"], [392, 695, "Nepal"]]],
  ["america", "ocean", [[148, 613, "North"], [147, 652, "Pacific"], [146, 691, "Ocean"]]],
  ["atlantic", "ocean", [[965, 528, "North"], [964, 567, "Atlantic"], [963, 606, "Ocean"]]],
  ["pacific", "ocean", [[802, 613, "North"], [801, 652, "Pacific"], [800, 691, "Ocean"]]],
  ["atlantic", "sea", [[121, 738, "Gulf of"], [121, 767, "Mexico"], [379, 948, "Caribbean Sea"]]],
  ["europe", "sea", [[1155, 984, "Gulf of Aden"], [1438, 988, "Arabian Sea"]]],
  ["asia", "sea", [[1251, 458, "Sea of Japan"], [1106, 654, "East China Sea"], [1219, 860, "Philippine Sea"], [911, 917, "South"], [911, 945, "China Sea"], [453, 966, "Bay of Bengal"], [687, 1018, "Gulf of"], [690, 1047, "Thailand"]]],
  ["pacific", "sea", [[129, 117, "Sea of"], [129, 145, "Okhotsk"]]],
];

const MapText = styled.text`
  text-anchor: middle;
  paint-order: stroke;
  stroke-linejoin: round;
  stroke-width: ${(p) => (p.$kind === "sea" || p.$kind === "ocean" ? 0 : 2)}px;
  stroke: rgba(255, 255, 255, 0.7);
  fill: ${(p) => (p.$kind === "sea" || p.$kind === "ocean" ? "#4d80cf" : p.$kind === "state" ? "#333" : "#1c1c1c")};
  font-size: ${(p) => ({ country: 11, small: 9, state: 9, sea: 10, ocean: 12 })[p.$kind]}px;
  font-style: ${(p) => (p.$kind === "sea" || p.$kind === "ocean" ? "italic" : "normal")};
  font-weight: ${(p) => (p.$kind === "country" || p.$kind === "small" ? 500 : 400)};
  letter-spacing: ${(p) => (p.$kind === "ocean" ? "2px" : "normal")};
`;

const PINS = [["america", 1156, 580], ["america", 1441, 655], ["atlantic", 121, 545]];

function scatter(seed, count, top, bottom, size) {
  let s = seed;
  const next = () => (s = (s * 16807) % 2147483647) / 2147483647;
  const n = (k) => Math.round((next() - 0.5) * k);
  let d = "";
  for (let i = 0; i < count; i++) {
    const x = Math.round(next() * 1500);
    const y = Math.round(top + next() * (bottom - top));
    const w = Math.round(size * (0.3 + next()));
    d += `M${x} ${y}l${w} ${n(size)} ${Math.round(w / 2)} ${n(size)} ${-Math.round(w / 3)} ${n(size)} ${-w} ${n(size)}z`;
  }
  return d;
}

function WorldMap() {
  const names = Object.keys(SHEET);
  return (
    <svg viewBox="0 0 2300 350" preserveAspectRatio="xMidYMid slice" role="img" aria-label="World map">
      <defs>
        {names.map((n) => (
          <clipPath id={`land-${n}`} key={n}>
            <path d={LAND[n].join("")} />
          </clipPath>
        ))}
        <linearGradient id="pin" x2="0" y2="1">
          <stop offset="0" stopColor="#ff776b" />
          <stop offset="1" stopColor="#f0382f" />
        </linearGradient>
      </defs>
      <g transform="translate(0 -6) scale(.33333)" strokeLinejoin="round">
        {names.map((n, i) => (
          <g key={n} transform={`translate(${SHEET[n]} 0)`}>
            <g clipPath={`url(#land-${n})`}>
              <rect x="-80" width="1800" height="1080" fill="#dfe9cb" />
              {TERRAIN[n].map(([fill, d]) => <path key={d} d={d} fill={fill} />)}
              <path d={scatter(9187 + i * 3701, 420, ...FOREST[n], 26)} fill="#bfe0b3" opacity=".5" />
              <path d={scatter(71723 + i * 5309, 500, 20, 1040, 18)} fill="#f4f1e2" opacity=".5" />
              <path d={scatter(5231 + i * 977, 500, 20, FOREST[n][1], 11)} fill="#f7f6f0" opacity=".7" />
            </g>
            {WATER[n].map((d) => <path key={d} d={d} fill="#a3ccff" />)}
            {DASHED[n].map((d) => <path key={d} d={d} fill="none" stroke="#8c8c88" strokeOpacity=".6" strokeWidth="2" strokeDasharray="12 6" />)}
          </g>
        ))}
        {names.map((n) => (
          <g key={n} transform={`translate(${SHEET[n]} 0)`} fill="none" stroke="#6f7271" strokeWidth="3">
            {BORDERS[n].map((d) => <path key={d} d={d} />)}
          </g>
        ))}
        <path d="M6035 18l-63 100 168 132V1068" fill="none" stroke="#a08fb4" strokeWidth="5" strokeDasharray="18 6" />
      </g>
      {LABELS.map(([sheet, kind, items]) =>
        items.map(([x, y, label]) => (
          <MapText key={sheet + kind + label} $kind={kind} x={(SHEET[sheet] + x) / 3} y={y / 3 - 6}>{label}</MapText>
        ))
      )}
      {PINS.map(([sheet, x, y]) => (
        <g key={x} transform={`translate(${(SHEET[sheet] + x) / 3} ${y / 3 - 6})`}>
          <path d="M0 0C-1-13-10.500-18-10.500-28.500a10.500 10.500 0 0 1 21 0C10.500-18 1-13 0 0z" fill="url(#pin)" stroke="#b3312b" />
          <circle cy="-28" r="3.600" fill="#5e1210" />
        </g>
      ))}
    </svg>
  );
}

const GOOGLE = [["G", "#4285f4"], ["o", "#ea4335"], ["o", "#fbbc05"], ["g", "#4285f4"], ["l", "#34a853"], ["e", "#ea4335"]];

function MapPanel() {
  return (
    <MapBox>
      <WorldMap />
      <MapType>
        <TypeButton type="button" $active>Map</TypeButton>
        <TypeButton type="button">Satellite</TypeButton>
      </MapType>
      <GoogleMark href="#google" aria-label="Google">
        {GOOGLE.map(([letter, color], i) => <Tint key={i} $color={color}>{letter}</Tint>)}
      </GoogleMark>
      <MapControls>
        <ControlCard>
          <ControlButton type="button" $height={28} aria-label="Street View"><Pegman /></ControlButton>
        </ControlCard>
        <ControlCard>
          <ControlButton type="button" $height={26} aria-label="Zoom in">
            <svg width="10" height="10" viewBox="0 0 10 10"><path d="M5 0v10M0 5h10" stroke="#666" strokeWidth="3" /></svg>
          </ControlButton>
          <ControlRule />
          <ControlButton type="button" $height={26} aria-label="Zoom out">
            <svg width="10" height="10" viewBox="0 0 10 10"><path d="M0 5h10" stroke="#666" strokeWidth="3" /></svg>
          </ControlButton>
        </ControlCard>
      </MapControls>
      <Attribution>
        <span>Map data ©2017 Google, INEGI</span>
        <a href="#terms">Terms of Use</a>
        <a href="#report">Report a map error</a>
      </Attribution>
    </MapBox>
  );
}

export default function App() {
  return (
    <Page>
      <GlobalStyle />
      <Header>HousingSearch</Header>
      <Body>
        <Sidebar>
          <NavItem href="#city" $active><CityIcon />By City</NavItem>
          <NavItem href="#logout"><LockIcon />Log Out</NavItem>
        </Sidebar>
        <Content>
          <Breadcrumb>HousingSearch &gt; City</Breadcrumb>
          <Title>BY CITY</Title>
          <Alert role="status">
            <span>Hi, To get an information about a state, please choose your preferred state below and a structure type and click add</span>
            <CloseButton type="button" aria-label="Close"><CloseIcon /></CloseButton>
          </Alert>
          <Toolbar>
            <Group $gap={30}>
              <Group $gap={20}>
                <FieldLabel>
                  City
                  <SelectBox $width={154}>
                    <Select defaultValue="New York"><option>New York</option></Select>
                    <Arrows />
                  </SelectBox>
                </FieldLabel>
                <FieldLabel>
                  Structure
                  <SelectBox $width={138}>
                    <Select defaultValue="1 Bedroom"><option>1 Bedroom</option></Select>
                    <Arrows />
                  </SelectBox>
                </FieldLabel>
              </Group>
              <Button type="button">Add</Button>
            </Group>
            <Group $gap={14}>
              <PdfIcon />
              <Button type="button">Print</Button>
              <Button type="button">PDF</Button>
              <Button type="button">Reset Page</Button>
            </Group>
          </Toolbar>
          <Chart />
          <MapPanel />
        </Content>
      </Body>
    </Page>
  );
}
